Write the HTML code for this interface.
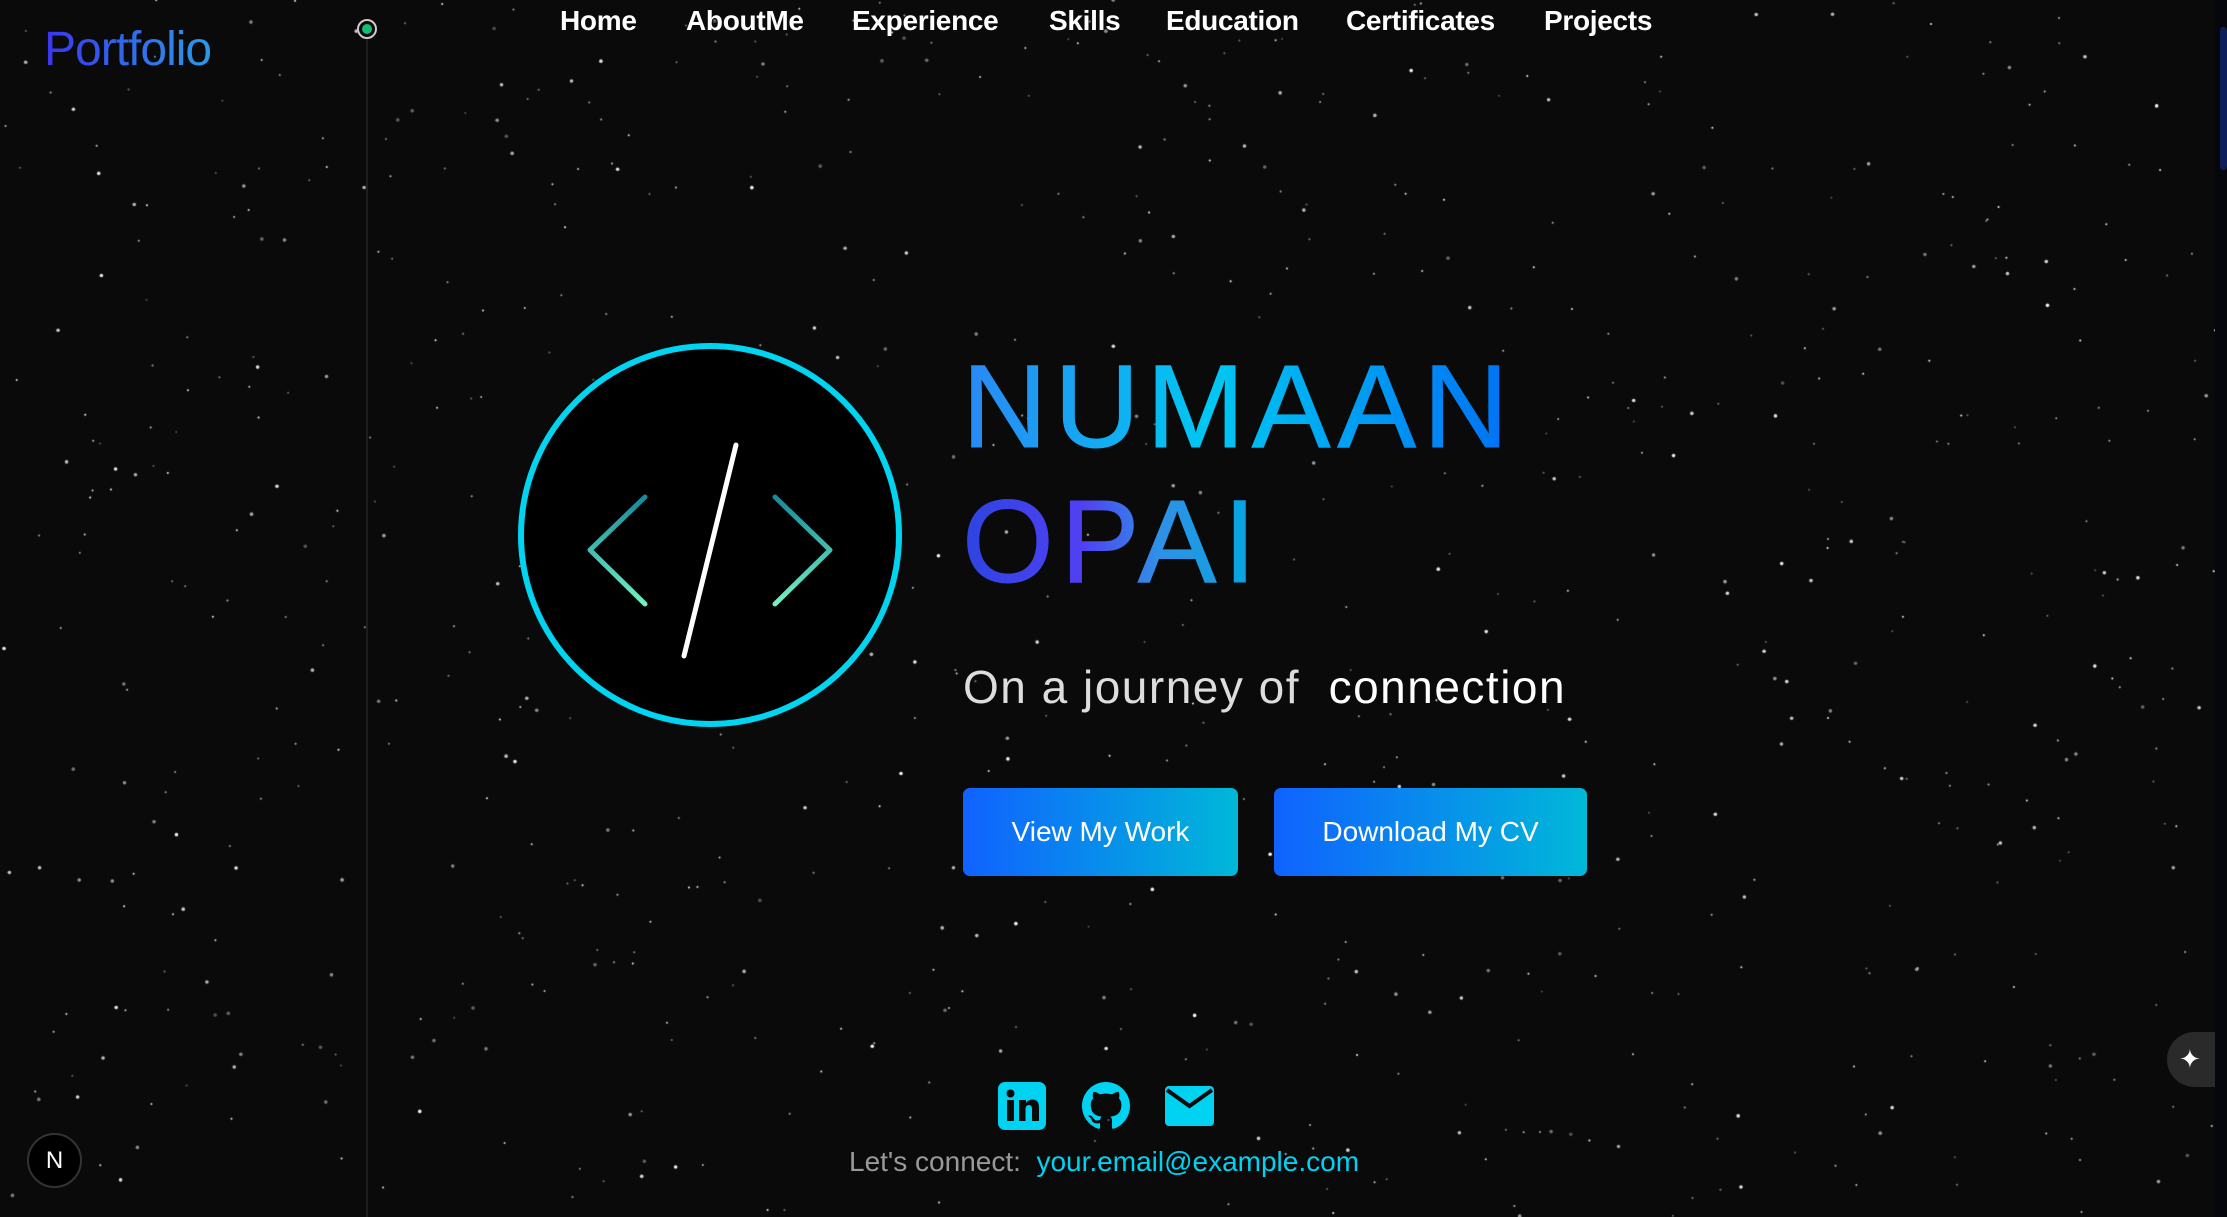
<!DOCTYPE html>
<html><head><meta charset="utf-8"><style>
*{margin:0;padding:0;box-sizing:border-box}
html,body{width:2227px;height:1217px;overflow:hidden;background:#0a0a0a;font-family:"Liberation Sans",sans-serif}
#stars{position:absolute;left:0;top:0}
.abs{position:absolute}
.logo{left:44px;top:22px;font-size:48px;background:linear-gradient(90deg,#3a36f0,#2a9ae8);-webkit-background-clip:text;color:transparent;letter-spacing:-1px}
.nav{top:5px;font-size:28px;font-weight:bold;color:#fff;white-space:nowrap;letter-spacing:-0.3px}
.vline{left:366px;top:36px;width:2px;height:1181px;background:#1e1e1e}
.dot{left:357px;top:19px;width:20px;height:20px;border-radius:50%;border:2px solid #ccc;background:#0a0a0a}
.dot:after{content:"";position:absolute;left:3px;top:3px;width:10px;height:10px;border-radius:50%;background:#10c070}
.name{font-size:118px;letter-spacing:7px;line-height:1;-webkit-background-clip:text;color:transparent;-webkit-text-stroke:1px transparent}
.btn{top:788px;height:88px;border-radius:7px;background:linear-gradient(90deg,#1062ff,#00b8d8);color:#fff;font-size:28px;display:flex;align-items:center;justify-content:center}
</style></head><body>
<canvas id="stars" width="2227" height="1217"></canvas>
<div class="abs vline"></div>
<div class="abs dot"></div>
<div class="abs logo">Portfolio</div>
<div class="abs nav" style="left:560px">Home</div>
<div class="abs nav" style="left:686px">AboutMe</div>
<div class="abs nav" style="left:852px">Experience</div>
<div class="abs nav" style="left:1049px">Skills</div>
<div class="abs nav" style="left:1166px">Education</div>
<div class="abs nav" style="left:1346px">Certificates</div>
<div class="abs nav" style="left:1544px">Projects</div>

<svg class="abs" style="left:510px;top:333px" width="402" height="404" viewBox="510 333 402 404">
<defs><linearGradient id="ch" x1="0" y1="0" x2="0" y2="1"><stop offset="0" stop-color="#168a9c"/><stop offset="1" stop-color="#70f2c4"/></linearGradient></defs>
<circle cx="710" cy="535" r="189" fill="#000" stroke="#00d4f0" stroke-width="6"/>
<polyline points="645,497 590,550 645,604" fill="none" stroke="url(#ch)" stroke-width="5" stroke-linecap="round" stroke-linejoin="round"/>
<polyline points="775,497 830,550 775,604" fill="none" stroke="url(#ch)" stroke-width="5" stroke-linecap="round" stroke-linejoin="round"/>
<line x1="736" y1="445" x2="684" y2="656" stroke="#fff" stroke-width="5" stroke-linecap="round"/>
</svg>

<div class="abs name" style="left:962px;top:348px;background-image:linear-gradient(90deg,#2a88f4,#00c8f2 45%,#0070f4)">NUMAAN</div>
<div class="abs name" style="left:962px;top:483px;background-image:linear-gradient(90deg,#2d44e0,#5040f4 40%,#3090e6 65%,#00a8e0)">OPAI</div>
<div class="abs" style="left:963px;top:660px;font-size:46px;color:#ddd;letter-spacing:1.5px;white-space:pre">On a journey of  <span style="color:#fff">connection</span></div>
<div class="abs btn" style="left:963px;width:275px">View My Work</div>
<div class="abs btn" style="left:1274px;width:313px">Download My CV</div>

<svg class="abs" style="left:998px;top:1082px" width="48" height="48" viewBox="0 0 48 48"><rect width="48" height="48" rx="7" fill="#00d2f2"/><rect x="9" y="18" width="7" height="21" fill="#0a0a0a"/><circle cx="12.5" cy="11.5" r="4" fill="#0a0a0a"/><path d="M21 18h7v3c1.5-2.5 4-3.5 6.5-3.5 4.5 0 6.5 3 6.5 8V39h-7V27c0-2.5-1-4-3-4s-3.5 1.5-3.5 4v12h-6.5z" fill="#0a0a0a"/></svg>
<svg class="abs" style="left:1082px;top:1082px" width="48" height="48" viewBox="0 0 16 16"><path fill="#00d2f2" d="M8 0C3.58 0 0 3.58 0 8c0 3.540 2.29 6.53 5.47 7.59.4.07.55-.17.55-.38 0-.19-.01-.82-.01-1.49-2.01.37-2.530-.49-2.69-.94-.09-.23-.48-.94-.82-1.13-.28-.15-.68-.52-.01-.53.63-.01 1.08.58 1.23.82.72 1.21 1.87.87 2.33.66.07-.52.28-.87.51-1.07-1.78-.2-3.64-.89-3.64-3.95 0-.87.31-1.59.82-2.15-.08-.2-.36-1.02.08-2.12 0 0 .67-.21 2.2.82.64-.18 1.32-.27 2-.27.68 0 1.36.09 2 .27 1.53-1.04 2.2-.82 2.2-.82.44 1.1.16 1.92.08 2.12.51.56.82 1.27.82 2.15 0 3.07-1.87 3.75-3.65 3.95.29.25.54.73.54 1.48 0 1.07-.01 1.93-.01 2.2 0 .21.15.46.55.38A8.013 8.013 0 0016 8c0-4.42-3.58-8-8-8z"/></svg>
<svg class="abs" style="left:1165px;top:1086px" width="49" height="40" viewBox="0 0 49 40"><rect width="49" height="40" rx="4" fill="#00d2f2"/><polyline points="2,4 24.5,20 47,4" fill="none" stroke="#0a0a0a" stroke-width="4"/></svg>
<div class="abs" style="left:849px;top:1146px;font-size:28px;color:#999;white-space:pre">Let's connect:  <span style="color:#00d2f2">your.email@example.com</span></div>

<div class="abs" style="left:27px;top:1133px;width:55px;height:55px;border-radius:50%;background:#000;border:2px solid #333;color:#fff;font-size:24px;display:flex;align-items:center;justify-content:center">N</div>
<div class="abs" style="left:2167px;top:1032px;width:50px;height:55px;border-radius:28px 0 0 28px;background:#2a2a2a;color:#fff;font-size:26px;line-height:55px;padding-left:12px">✦</div>
<div class="abs" style="left:2215px;top:0;width:12px;height:1217px;background:#06070c"></div>
<div class="abs" style="left:2220px;top:27px;width:7px;height:143px;border-radius:4px;background:#0c1f5c"></div>
<script>
var c=document.getElementById('stars').getContext('2d'),s=12345;
function r(){s=(s*16807)%2147483647;return s/2147483647}
for(var i=0;i<800;i++){var x=r()*2227,y=r()*1217,z=r();c.fillStyle='rgba(255,255,255,'+(0.3+0.7*r())+')';c.beginPath();c.arc(x,y,z<0.7?1:1.8,0,7);c.fill()}
</script>
</body></html>
